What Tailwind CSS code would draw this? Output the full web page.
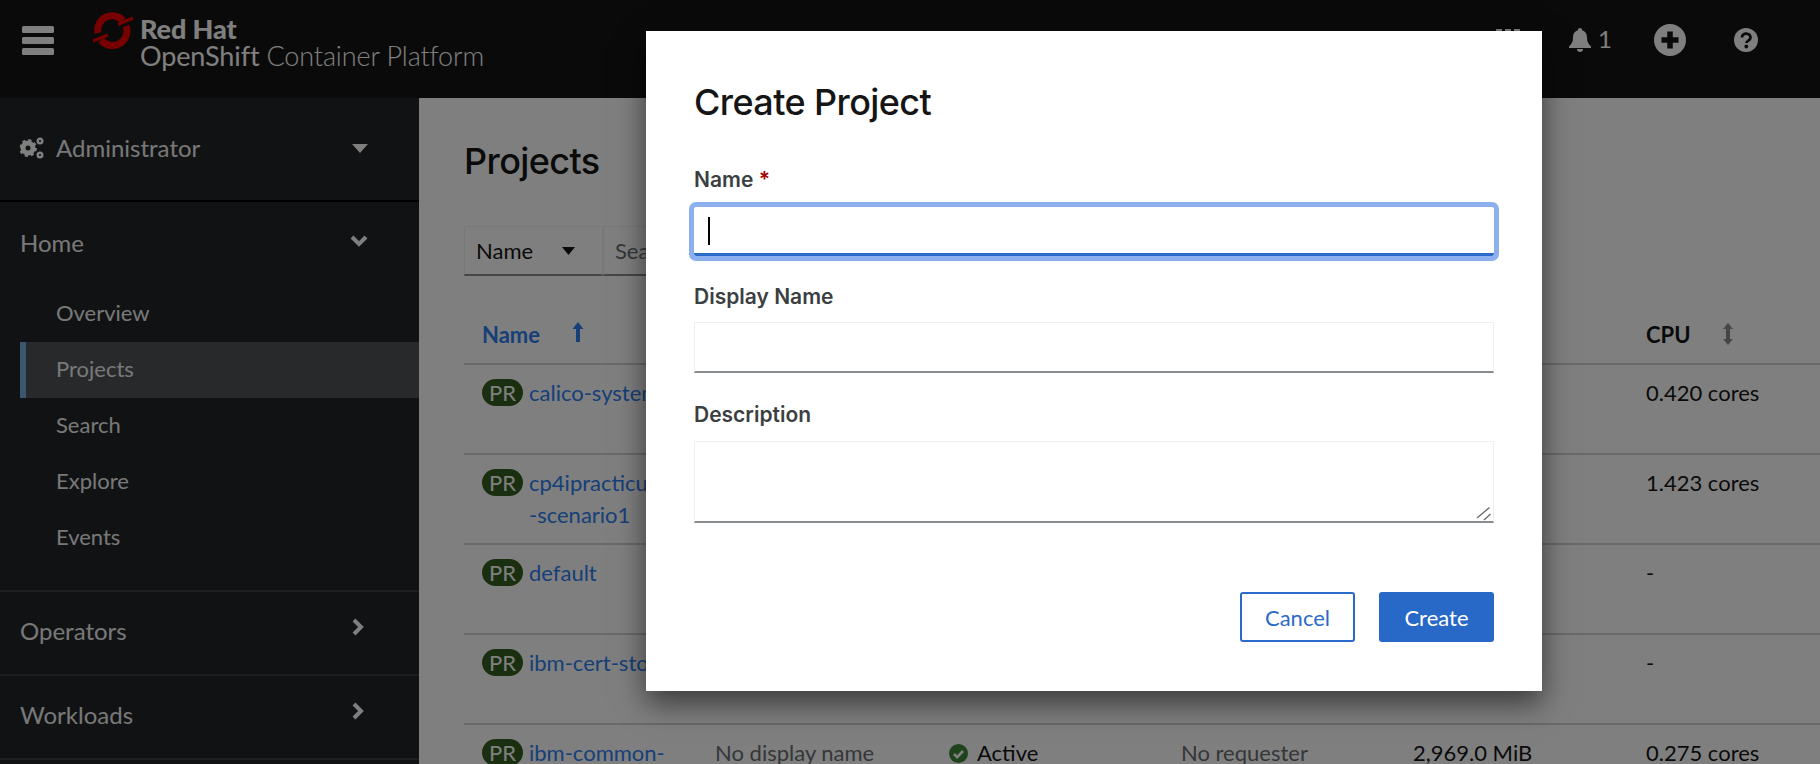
<!DOCTYPE html>
<html lang="en">
<head>
<meta charset="utf-8">
<title>Create Project</title>
<script src="https://cdn.jsdelivr.net/npm/@tailwindcss/browser@4"></script>
</head>
<body class="overflow-hidden">
<div class="relative w-[1820px] h-[764px] overflow-hidden bg-white font-['Lato','Liberation_Sans',sans-serif] text-[#151515]">

  <header class="h-[98px] bg-[#151515] flex items-start text-white">
    <svg class="ml-[22px] mt-[26px] w-[32px] h-[29px]" viewBox="0 0 32 29" fill="#fff"><rect width="32" height="7" rx="1.5"/><rect y="11" width="32" height="7" rx="1.5"/><rect y="22" width="32" height="7" rx="1.5"/></svg>
    <svg class="ml-[38px] mt-[11px] w-[42px] h-[38px]" viewBox="0 0 42 38" fill="none" stroke="#ee0000" stroke-width="7"><path d="M6 22A14.500 14.500 0 0 1 31 9.500"/><path d="M34 15A14.500 14.500 0 0 1 9 29"/><path d="M26 13.500L41 7M1 30L16 24" stroke-width="3"/></svg>
    <div class="ml-[6px] mt-[15px]">
      <div class="text-[27px] leading-[28px] font-black tracking-[-0.1px]">Red Hat</div>
      <div class="text-[27px] leading-[26px] tracking-[-0.12px]"><span class="font-normal">OpenShift</span> <span class="font-light">Container Platform</span></div>
    </div>
    <div class="ml-auto flex items-start">
      <svg class="mt-[29px] w-[24px] h-[24px]" viewBox="0 0 24 24" fill="#fff"><rect width="6" height="6"/><rect x="9" width="6" height="6"/><rect x="18" width="6" height="6"/></svg>
      <div class="ml-[49px] mt-[28px] flex items-start">
        <svg class="w-[22px] h-[24px]" viewBox="0 0 22 24" fill="#fff"><path d="M11 0a2 2 0 0 1 2 2.200C17 3.200 18 6.500 18 10c0 4 1.500 6 4 8.500V20H0v-1.500C2.500 16 4 14 4 10c0-3.500 1-6.800 5-7.800A2 2 0 0 1 11 0z"/><path d="M8 21h6a3 3 0 0 1-6 0z"/></svg>
        <span class="ml-[7px] -mt-[3px] w-[13px] text-[24px] leading-[28px] font-normal">1</span>
      </div>
      <svg class="ml-[43px] mt-[24px] w-[32px] h-[32px]" viewBox="0 0 32 32"><circle cx="16" cy="16" r="16" fill="#fff"/><path d="M16 7.500v17M7.500 16h17" stroke="#151515" stroke-width="5.500"/></svg>
      <svg class="ml-[48px] mr-[62px] mt-[28px] w-[24px] h-[24px]" viewBox="0 0 24 24"><circle cx="12" cy="12" r="12" fill="#fff"/><path d="M8 9.500c0-5.500 8.500-5 8.500 0 0 3-4 3-4 5.500" fill="none" stroke="#151515" stroke-width="2.800"/><circle cx="12.300" cy="18.500" r="1.900" fill="#151515"/></svg>
    </div>
  </header>

  <div class="flex h-[666px]">
    <nav class="w-[419px] shrink-0 bg-[#212427] text-[#f0f0f0] text-[24px] leading-[30px]">
      <div class="h-[104px] border-b-2 border-black flex items-center pl-[20px] pr-[51px] pb-[2px]">
        <svg class="w-[24px] h-[24px]" viewBox="0 0 24 24" fill="none" stroke="#fff"><circle cx="8" cy="12" r="5" stroke-width="5"/><circle cx="8" cy="12" r="7.500" stroke-width="2.800" stroke-dasharray="3 2.900"/><circle cx="20" cy="5" r="2.300" stroke-width="2.400"/><circle cx="20" cy="19" r="2.300" stroke-width="2.400"/></svg>
        <span class="ml-[12px]">Administrator</span>
        <svg class="ml-auto w-[16px] h-[9px]" viewBox="0 0 16 9" fill="#fff"><path d="M0 0h16L8 9z"/></svg>
      </div>
      <div class="h-[84px] flex items-center pl-[20px] pr-[51px] pb-[3px]">
        <span>Home</span>
        <svg class="ml-auto -mt-[4px] w-[18px] h-[12px]" viewBox="0 0 18 12" fill="none" stroke="#fff" stroke-width="4"><path d="M2 2l7 7 7-7"/></svg>
      </div>
      <ul class="text-[22px] h-[306px] border-b-2 border-[#3c3f42]">
        <li class="h-[56px] flex items-center pl-[56px] pb-[2px]">Overview</li>
        <li class="h-[56px] flex items-center pl-[30px] pb-[2px] ml-[20px] border-l-[6px] border-[#76aee0] bg-[#4f5255] ">Projects</li>
        <li class="h-[56px] flex items-center pl-[56px] pb-[2px]">Search</li>
        <li class="h-[56px] flex items-center pl-[56px] pb-[2px]">Explore</li>
        <li class="h-[56px] flex items-center pl-[56px] pb-[2px]">Events</li>
      </ul>
      <div class="h-[84px] border-b-2 border-[#3c3f42] flex items-center pl-[20px] pr-[55px] pb-[5px]">
        <span>Operators</span>
        <svg class="ml-auto -mt-[8px] w-[12px] h-[18px]" viewBox="0 0 12 18" fill="none" stroke="#fff" stroke-width="4"><path d="M2 2l7 7-7 7"/></svg>
      </div>
      <div class="h-[84px] border-b-2 border-[#3c3f42] flex items-center pl-[20px] pr-[55px] pb-[5px]">
        <span>Workloads</span>
        <svg class="ml-auto -mt-[8px] w-[12px] h-[18px]" viewBox="0 0 12 18" fill="none" stroke="#fff" stroke-width="4"><path d="M2 2l7 7-7 7"/></svg>
      </div>
    </nav>

    <main class="flex-1 pl-[45px] bg-white text-[22px] leading-[28px]">
      <h1 class="mt-[41px] text-[36px] leading-[44px] font-medium tracking-[-0.6px] font-['Inter','Liberation_Sans',sans-serif]">Projects</h1>
      <div class="mt-[43px] w-[500px] h-[50px] flex">
        <div class="w-[139px] border border-[#f0f0f0] border-b-2 border-b-[#8a8d90] flex items-center pl-[11px] pr-[27px]">
          <span>Name</span>
          <svg class="ml-auto w-[13px] h-[8px]" viewBox="0 0 13 8" fill="#151515"><path d="M0 0h13L6.500 8z"/></svg>
        </div>
        <div class="flex-1 border border-[#f0f0f0] border-b-2 border-b-[#8a8d90] flex items-center pl-[11px] text-[#6a6e73]">Search</div>
      </div>
      <div class="mt-[31px]">
        <div class="h-[58px] border-b-2 border-[#d2d2d2] grid grid-cols-[251px_234px_232px_232px_233px_1fr] items-center font-bold">
          <div class="pl-[18px] flex items-center text-[#2e80f0]">Name
            <svg class="ml-[32px] -mt-[6px] w-[12px] h-[20px]" viewBox="0 0 12 20" fill="#2e80f0"><path d="M6 0l5.500 7H8v13H4V7H.5z"/></svg>
          </div>
          <div></div><div></div><div></div><div></div>
          <div class="flex items-center">CPU
            <svg class="ml-[32px] -mt-[2px] w-[10px] h-[22px]" viewBox="0 0 10 22" fill="#8a8d90"><path d="M5 0l5 6H7v10h3l-5 6-5-6h3V6H0z"/></svg>
          </div>
        </div>

        <div class="h-[90px] border-b-2 border-[#d2d2d2] grid grid-cols-[251px_234px_232px_232px_233px_1fr] pt-[14px]">
          <div class="pl-[18px] flex items-start text-[#2e80f0]"><span class="w-[41px] h-[27px] shrink-0 rounded-full bg-[#345e20] text-white text-center leading-[27px]">PR</span><span class="ml-[6px]">calico-system</span></div>
          <div></div><div></div><div></div><div></div><div>0.420 cores</div>
        </div>
        <div class="h-[90px] border-b-2 border-[#d2d2d2] grid grid-cols-[251px_234px_232px_232px_233px_1fr] pt-[14px]">
          <div class="pl-[18px] flex items-start text-[#2e80f0]"><span class="w-[41px] h-[27px] shrink-0 rounded-full bg-[#345e20] text-white text-center leading-[27px]">PR</span><span class="ml-[6px] -mt-[2px] leading-[32px]">cp4ipracticum<br>-scenario1</span></div>
          <div></div><div></div><div></div><div></div><div>1.423 cores</div>
        </div>
        <div class="h-[90px] border-b-2 border-[#d2d2d2] grid grid-cols-[251px_234px_232px_232px_233px_1fr] pt-[14px]">
          <div class="pl-[18px] flex items-start text-[#2e80f0]"><span class="w-[41px] h-[27px] shrink-0 rounded-full bg-[#345e20] text-white text-center leading-[27px]">PR</span><span class="ml-[6px]">default</span></div>
          <div></div><div></div><div></div><div></div><div>-</div>
        </div>
        <div class="h-[90px] border-b-2 border-[#d2d2d2] grid grid-cols-[251px_234px_232px_232px_233px_1fr] pt-[14px]">
          <div class="pl-[18px] flex items-start text-[#2e80f0]"><span class="w-[41px] h-[27px] shrink-0 rounded-full bg-[#345e20] text-white text-center leading-[27px]">PR</span><span class="ml-[6px]">ibm-cert-store</span></div>
          <div></div><div></div><div></div><div></div><div>-</div>
        </div>
        <div class="h-[90px] grid grid-cols-[251px_234px_232px_232px_233px_1fr] pt-[14px]">
          <div class="pl-[18px] flex items-start text-[#2e80f0]"><span class="w-[41px] h-[27px] shrink-0 rounded-full bg-[#345e20] text-white text-center leading-[27px]">PR</span><span class="ml-[6px]">ibm-common-</span></div>
          <div class="text-[#6a6e73]">No display name</div>
          <div class="flex items-center h-[28px]"><svg class="w-[19px] h-[19px]" viewBox="0 0 19 19"><circle cx="9.500" cy="9.500" r="9.500" fill="#3e8635"/><path d="M5 10l3.200 3.200L14 7" fill="none" stroke="#fff" stroke-width="2.600"/></svg><span class="ml-[9px]">Active</span></div>
          <div class="text-[#6a6e73]">No requester</div>
          <div>2,969.0 MiB</div>
          <div>0.275 cores</div>
        </div>
      </div>
    </main>
  </div>

  <div class="absolute inset-0 bg-black/50"></div>

  <section class="absolute left-[646px] top-[31px] w-[896px] h-[660px] bg-white shadow-[0_12px_28px_rgba(0,0,0,0.55)] px-[48px] pt-[48px] font-['Inter','Liberation_Sans',sans-serif]">
    <h2 class="text-[36px] leading-[46px] font-medium tracking-[-0.6px]">Create Project</h2>
    <form class="mt-[41px]">
      <label class="block text-[21px] leading-[28px] font-semibold text-[#3c3f42]">Name <span class="text-[#a30000]">*</span></label>
      <div class="mt-[13px] h-[49px] border-b-[3px] border-[#2b6ac9] outline-[5px] outline-[#8cb0ee] rounded-[2px] pl-[14px] pt-[10px]"><div class="w-[2px] h-[28px] bg-black"></div></div>
      <label class="block mt-[27px] text-[21px] leading-[28px] font-semibold text-[#3c3f42]">Display Name</label>
      <input type="text" class="block mt-[11px] w-full h-[51px] border border-[#f0f0f0] border-b-2 border-b-[#8a8d90] outline-none">
      <label class="block mt-[28px] text-[21px] leading-[28px] font-semibold text-[#3c3f42]">Description</label>
      <div class="relative mt-[12px] h-[82px]">
        <textarea class="block w-full h-full border border-[#f0f0f0] border-b-2 border-b-[#8a8d90] outline-none resize-none"></textarea>
        <svg class="absolute right-[2px] bottom-[1px] w-[16px] h-[16px]" viewBox="0 0 16 16" fill="none" stroke="#707070" stroke-width="1.500"><path d="M1 12L13.500 1.500M8 14L14.500 8"/></svg>
      </div>
      <div class="mt-[69px] flex justify-end gap-[24px] font-['Lato','Liberation_Sans',sans-serif] text-[22px]">
        <button type="button" class="w-[115px] h-[50px] rounded-[3px] border-2 border-[#2b6ac9] text-[#2b6ac9] bg-white">Cancel</button>
        <button type="button" class="w-[115px] h-[50px] rounded-[3px] bg-[#2868c7] text-white">Create</button>
      </div>
    </form>
  </section>
</div>
</body>
</html>
